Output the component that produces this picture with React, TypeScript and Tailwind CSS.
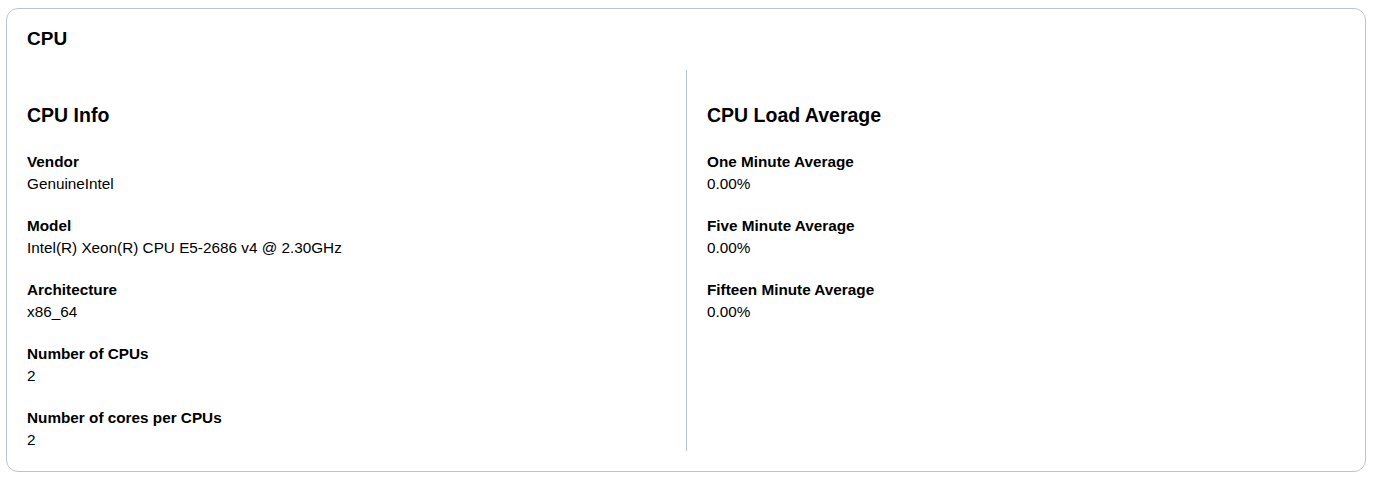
import type { FC } from 'react';

type Item = { label: string; value: string };

const cpuInfo: Item[] = [
  { label: 'Vendor', value: 'GenuineIntel' },
  { label: 'Model', value: 'Intel(R) Xeon(R) CPU E5-2686 v4 @ 2.30GHz' },
  { label: 'Architecture', value: 'x86_64' },
  { label: 'Number of CPUs', value: '2' },
  { label: 'Number of cores per CPUs', value: '2' }
];

const loadAverage: Item[] = [
  { label: 'One Minute Average', value: '0.00%' },
  { label: 'Five Minute Average', value: '0.00%' },
  { label: 'Fifteen Minute Average', value: '0.00%' }
];

const InfoList: FC<{ title: string; items: Item[] }> = ({ title, items }) => {
  return (
    <div className="pt-[31px]">
      <h3 className="mb-[22px] text-[19.5px] font-bold leading-7">{title}</h3>
      <div className="flex flex-col gap-5">
        {items.map((item) => (
          <div key={item.label}>
            <div className="text-[15.3px] font-bold leading-[22px]">{item.label}</div>
            <div className="text-[15.3px] leading-[22px]">{item.value}</div>
          </div>
        ))}
      </div>
    </div>
  );
};

const App: FC = () => {
  return (
    <div className="bg-white pl-[6px] pr-[9px] pt-2 font-['Liberation_Sans',Arial,sans-serif] text-black">
      <div className="rounded-xl border border-[#bcc4ce] bg-white p-5">
        <h2 className="text-[19px] font-bold leading-[19px]">CPU</h2>
        <div className="mt-[22px] grid grid-cols-2">
          <InfoList title="CPU Info" items={cpuInfo} />
          <div className="border-l border-[#b6bfcb] pl-5">
            <InfoList title="CPU Load Average" items={loadAverage} />
          </div>
        </div>
      </div>
    </div>
  );
};

export default App;
